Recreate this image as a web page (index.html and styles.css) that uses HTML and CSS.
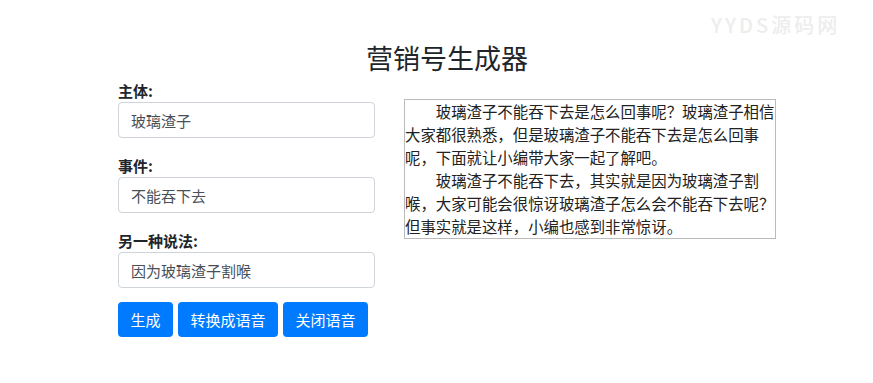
FILE: index.html
```html
<!DOCTYPE html>
<html lang="zh-CN">
  <head>
    <meta charset="UTF-8" />
    <meta name="viewport" content="width=device-width, initial-scale=1.0" />
    <title>营销号生成器</title>
    <link rel="stylesheet" href="styles.css">
  </head>
  <body>
    <div class="watermark">YYDS源码网</div>
    <div class="container">
      <h3 class="title">营销号生成器</h3>
      <div class="row">
        <div class="form-col">
          <label class="form-label" for="subject">主体:</label>
          <input class="form-input" id="subject" type="text" value="玻璃渣子" />
          <label class="form-label" for="event">事件:</label>
          <input class="form-input" id="event" type="text" value="不能吞下去" />
          <label class="form-label" for="other">另一种说法:</label>
          <input class="form-input" id="other" type="text" value="因为玻璃渣子割喉" />
          <div class="btn-row">
            <button class="btn" id="genBtn">生成</button>
            <button class="btn" id="speakBtn">转换成语音</button>
            <button class="btn" id="stopBtn">关闭语音</button>
          </div>
        </div>
        <div class="result" id="result">
          <p>玻璃渣子不能吞下去是怎么回事呢？玻璃渣子相信大家都很熟悉，但是玻璃渣子不能吞下去是怎么回事呢，下面就让小编带大家一起了解吧。</p>
          <p>玻璃渣子不能吞下去，其实就是因为玻璃渣子割喉，大家可能会很惊讶玻璃渣子怎么会不能吞下去呢？但事实就是这样，小编也感到非常惊讶。</p>
        </div>
      </div>
    </div>
  </body>
</html>
```

FILE: styles.css
```css
body {
  margin: 0;
  font-family: "Noto Sans CJK SC", "Liberation Sans", sans-serif;
  color: #212529;
  background: #fff;
}
.watermark {
  position: absolute;
  top: 11px;
  left: 711px;
  font-size: 20px;
  line-height: 28px;
  font-weight: 500;
  letter-spacing: 3px;
  color: #ededed;
}
.container {
  padding-left: 118px;
  width: 658px;
}
.title {
  margin: 40px 0 0;
  font-size: 27px;
  line-height: 36px;
  font-weight: normal;
  text-align: center;
}
.row {
  display: flex;
  gap: 29px;
  margin-top: 5px;
}
.form-col {
  width: 257px;
  display: flex;
  flex-direction: column;
}
.form-label {
  font-size: 15px;
  font-weight: bold;
  line-height: 20px;
  margin-bottom: 1px;
}
.form-input {
  box-sizing: border-box;
  height: 36px;
  width: 100%;
  padding: 0 12px;
  border: 1px solid #ced4da;
  border-radius: 4px;
  font-family: inherit;
  font-size: 15px;
  color: #495057;
  margin-bottom: 18px;
}
.btn-row {
  display: flex;
  gap: 5px;
  margin-top: -4px;
}
.btn {
  height: 35px;
  padding: 0 12.5px;
  border: none;
  border-radius: 4px;
  background: #007bff;
  color: #fff;
  font-family: inherit;
  font-size: 15px;
  cursor: pointer;
}
.result {
  box-sizing: border-box;
  width: 372px;
  height: 140px;
  margin-top: 18px;
  border: 1px solid #bbb;
  padding: 0;
  font-size: 15.4px;
  line-height: 23.1px;
  color: #222;
}
.result p {
  margin: 0;
  text-indent: 2em;
}
```
